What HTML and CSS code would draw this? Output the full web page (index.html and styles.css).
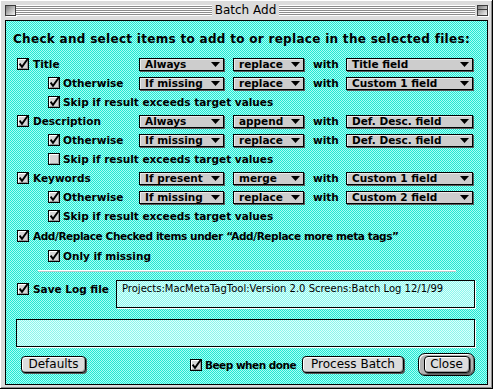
FILE: index.html
```html
<!DOCTYPE html>
<html>
<head>
<meta charset="utf-8">
<link rel="stylesheet" href="styles.css">
</head>
<body>
<svg class="defs" width="0" height="0" aria-hidden="true">
  <defs>
    <symbol id="cbon" viewBox="0 0 12 12">
      <rect x="0.5" y="0.5" width="11" height="11" fill="#d6d6d6" stroke="#000"/>
      <path d="M1.5 10V1.5H10" fill="none" stroke="#fff"/>
      <path d="M10.5 2V10.5H2" fill="none" stroke="#9a9a9a"/>
      <path d="M2.6 5.6L5 8.8L10.8 0.8" fill="none" stroke="#000" stroke-width="1.9"/>
    </symbol>
    <symbol id="cboff" viewBox="0 0 12 12">
      <rect x="0.5" y="0.5" width="11" height="11" fill="#d6d6d6" stroke="#000"/>
      <path d="M1.5 10V1.5H10" fill="none" stroke="#fff"/>
      <path d="M10.5 2V10.5H2" fill="none" stroke="#9a9a9a"/>
    </symbol>
    <symbol id="tri" viewBox="0 0 9 5">
      <path d="M0 0H9L4.5 5Z" fill="#000"/>
    </symbol>
  </defs>
</svg>

<div class="win">
  <div class="titlebar">
    <span class="closebox"></span>
    <span class="stripes"></span>
    <span class="wtitle">Batch Add</span>
    <span class="stripes"></span>
    <span class="zoombox"><span class="zin"></span></span>
  </div>

  <div class="content">
    <div class="head">Check and select items to add to or replace in the selected files:</div>

    <div class="rows">
      <div class="row">
        <div class="lbl l1"><svg class="cb"><use href="#cbon"/></svg>Title</div>
        <div class="pop p1"><span>Always</span><svg class="tri"><use href="#tri"/></svg></div>
        <div class="pop p2"><span>replace</span><svg class="tri"><use href="#tri"/></svg></div>
        <div class="with">with</div>
        <div class="pop p3"><span>Title field</span><svg class="tri"><use href="#tri"/></svg></div>
      </div>
      <div class="row">
        <div class="lbl l2"><svg class="cb"><use href="#cbon"/></svg>Otherwise</div>
        <div class="pop p1"><span>If missing</span><svg class="tri"><use href="#tri"/></svg></div>
        <div class="pop p2"><span>replace</span><svg class="tri"><use href="#tri"/></svg></div>
        <div class="with">with</div>
        <div class="pop p3"><span>Custom 1 field</span><svg class="tri"><use href="#tri"/></svg></div>
      </div>
      <div class="row">
        <div class="lbl l2 span"><svg class="cb"><use href="#cbon"/></svg>Skip if result exceeds target values</div>
      </div>

      <div class="row">
        <div class="lbl l1"><svg class="cb"><use href="#cbon"/></svg>Description</div>
        <div class="pop p1"><span>Always</span><svg class="tri"><use href="#tri"/></svg></div>
        <div class="pop p2"><span>append</span><svg class="tri"><use href="#tri"/></svg></div>
        <div class="with">with</div>
        <div class="pop p3"><span>Def. Desc. field</span><svg class="tri"><use href="#tri"/></svg></div>
      </div>
      <div class="row">
        <div class="lbl l2"><svg class="cb"><use href="#cbon"/></svg>Otherwise</div>
        <div class="pop p1"><span>If missing</span><svg class="tri"><use href="#tri"/></svg></div>
        <div class="pop p2"><span>replace</span><svg class="tri"><use href="#tri"/></svg></div>
        <div class="with">with</div>
        <div class="pop p3"><span>Def. Desc. field</span><svg class="tri"><use href="#tri"/></svg></div>
      </div>
      <div class="row">
        <div class="lbl l2 span"><svg class="cb"><use href="#cboff"/></svg>Skip if result exceeds target values</div>
      </div>

      <div class="row">
        <div class="lbl l1"><svg class="cb"><use href="#cbon"/></svg>Keywords</div>
        <div class="pop p1"><span>If present</span><svg class="tri"><use href="#tri"/></svg></div>
        <div class="pop p2"><span>merge</span><svg class="tri"><use href="#tri"/></svg></div>
        <div class="with">with</div>
        <div class="pop p3"><span>Custom 1 field</span><svg class="tri"><use href="#tri"/></svg></div>
      </div>
      <div class="row">
        <div class="lbl l2"><svg class="cb"><use href="#cbon"/></svg>Otherwise</div>
        <div class="pop p1"><span>If missing</span><svg class="tri"><use href="#tri"/></svg></div>
        <div class="pop p2"><span>replace</span><svg class="tri"><use href="#tri"/></svg></div>
        <div class="with">with</div>
        <div class="pop p3"><span>Custom 2 field</span><svg class="tri"><use href="#tri"/></svg></div>
      </div>
      <div class="row tall">
        <div class="lbl l2 span"><svg class="cb"><use href="#cbon"/></svg>Skip if result exceeds target values</div>
      </div>

      <div class="row tall">
        <div class="lbl l1 span tight"><svg class="cb"><use href="#cbon"/></svg>Add/Replace Checked items under “Add/Replace more meta tags”</div>
      </div>
      <div class="row tall">
        <div class="lbl l2 span"><svg class="cb"><use href="#cbon"/></svg>Only if missing</div>
      </div>
    </div>

    <div class="sep"></div>

    <div class="saverow">
      <div class="lbl l1 savelbl"><svg class="cb"><use href="#cbon"/></svg>Save Log file</div>
      <div class="logbox">Projects:MacMetaTagTool:Version 2.0 Screens:Batch Log 12/1/99</div>
    </div>

    <div class="status"></div>

    <div class="btnrow">
      <div class="btn defaults">Defaults</div>
      <div class="lbl beep"><svg class="cb"><use href="#cbon"/></svg>Beep when done</div>
      <div class="btn process">Process Batch</div>
      <div class="ring"><div class="btn close">Close</div></div>
    </div>
  </div>
</div>
</body>
</html>
```

FILE: styles.css
```css
html, body {
  margin: 0;
  padding: 0;
}

body {
  width: 493px;
  height: 389px;
  overflow: hidden;
  background: #fff;
  font-family: "DejaVu Sans", sans-serif;
  color: #000;
}

.defs {
  position: absolute;
  width: 0;
  height: 0;
}

.win {
  width: 493px;
  height: 389px;
  box-sizing: border-box;
  background: #dcdcdc;
  border-right: 1px solid #000;
  border-bottom: 1px solid #000;
  box-shadow: inset 1px 1px #fff, inset -1px -1px #8a8a8a;
  padding: 0 4px 0 5px;
  display: flex;
  flex-direction: column;
}

/* title bar */
.titlebar {
  height: 20px;
  display: flex;
  align-items: center;
}

.closebox {
  width: 11px;
  height: 11px;
  box-sizing: border-box;
  border: 1px solid #3a3a3a;
  background: linear-gradient(135deg, #7a7a7a, #f4f4f4);
  box-shadow: 1px 1px 0 #fff;
  margin-top: 1px;
}

.stripes {
  flex: 1;
  height: 11px;
  margin-top: 1px;
  background: repeating-linear-gradient(to bottom, #fff 0 1px, #8c8c8c 1px 2px);
}

.stripes:first-of-type {
  margin-left: 6px;
}

.wtitle {
  font-size: 12px;
  line-height: 20px;
  padding: 0 3px 0 3px;
  white-space: nowrap;
}

.zoombox {
  width: 11px;
  height: 11px;
  box-sizing: border-box;
  border: 1px solid #3a3a3a;
  background: linear-gradient(135deg, #7a7a7a, #f4f4f4);
  box-shadow: 1px 1px 0 #fff;
  margin-left: 2px;
  margin-top: 1px;
  display: flex;
  flex-direction: column;
}

.zin {
  height: 3px;
  border-bottom: 1px solid #3a3a3a;
}

/* content */
.content {
  height: 365px;
  box-sizing: border-box;
  border: 1px solid #000;
  background: repeating-conic-gradient(#22e6d2 0 25%, #a8fff4 0 50%) 0 0 / 2px 2px;
  padding-top: 10px;
  display: flex;
  flex-direction: column;
}

.head {
  font-weight: bold;
  font-size: 12px;
  line-height: 16px;
  padding-left: 7px;
  white-space: nowrap;
  letter-spacing: 0.3px;
}

.rows {
  margin-top: 11px;
}

.row {
  display: grid;
  grid-template-columns: 133px 94px 80px 33px 128px;
  height: 19px;
  align-items: start;
}

.row.tall {
  height: 20px;
}

.lbl {
  display: flex;
  align-items: center;
  height: 12px;
  font-weight: bold;
  font-size: 10.5px;
  white-space: nowrap;
}

.span {
  grid-column: 1 / -1;
}

.tight {
  letter-spacing: -0.4px;
}

.cb {
  width: 12px;
  height: 12px;
  flex: none;
  overflow: visible;
}

.l1 {
  padding-left: 11px;
}

.l1 .cb {
  margin-right: 4px;
}

.l2 {
  padding-left: 42px;
}

.l2 .cb {
  margin-right: 3px;
}

.pop {
  box-sizing: border-box;
  height: 13px;
  border: 1px solid #000;
  background: #cdcdcd;
  box-shadow: inset 1px 1px #ececec, 1px 1px 0 #5a5a5a;
  display: flex;
  align-items: center;
  justify-content: space-between;
  padding: 0 3px 0 5px;
  font-weight: bold;
  font-size: 10.5px;
  line-height: 11px;
  white-space: nowrap;
}

.p1 { width: 85px; }
.p2 { width: 71px; }
.p3 { width: 127px; }

.tri {
  width: 9px;
  height: 5px;
  flex: none;
}

.with {
  font-weight: bold;
  font-size: 10.5px;
  line-height: 13px;
}

/* separator */
.sep {
  margin: 0 31px 0 32px;
  height: 1px;
  background: #fff;
  border-bottom: 1px solid #b8c8c8;
}

/* save log */
.saverow {
  margin-top: 8px;
  display: flex;
  height: 28px;
}

.savelbl {
  margin-top: 3px;
  width: 99px;
}

.logbox {
  width: 359px;
  height: 28px;
  box-sizing: border-box;
  border: 1px solid #000;
  background: repeating-conic-gradient(#8cf6ec 0 25%, #dcfffc 0 50%) 0 0 / 2px 2px;
  box-shadow: 1px 1px 0 #fff;
  font-size: 10px;
  line-height: 12px;
  padding: 2px 0 0 5px;
  white-space: nowrap;
}

.status {
  margin: 11px 0 0 10px;
  width: 459px;
  height: 28px;
  box-sizing: border-box;
  border: 1px solid #000;
  background: repeating-conic-gradient(#8cf6ec 0 25%, #dcfffc 0 50%) 0 0 / 2px 2px;
  box-shadow: 1px 1px 0 #fff;
}

/* buttons */
.btnrow {
  margin-top: 6px;
  height: 23px;
  display: flex;
  align-items: center;
  padding-left: 15px;
}

.btn {
  box-sizing: border-box;
  height: 17px;
  border: 1px solid #000;
  border-radius: 4px;
  background: #dcdcdc;
  box-shadow: inset 1px 1px #fff, inset -1px -1px #9a9a9a, 1px 1px 0 #555;
  font-size: 12px;
  line-height: 15px;
  text-align: center;
  white-space: nowrap;
}

.defaults {
  width: 65px;
}

.beep {
  margin-left: 104px;
  width: 112px;
  height: 12px;
  letter-spacing: -0.5px;
}

.beep .cb {
  margin-right: 3px;
}

.process {
  width: 102px;
}

.ring {
  margin-left: 14px;
  width: 57px;
  height: 23px;
  box-sizing: border-box;
  border: 1px solid #000;
  border-radius: 7px;
  background: #b4b4b4;
  box-shadow: inset 1px 1px #fff, inset -1px -1px #6a6a6a;
  display: flex;
  align-items: center;
  justify-content: center;
}

.close {
  width: 46px;
}
```
